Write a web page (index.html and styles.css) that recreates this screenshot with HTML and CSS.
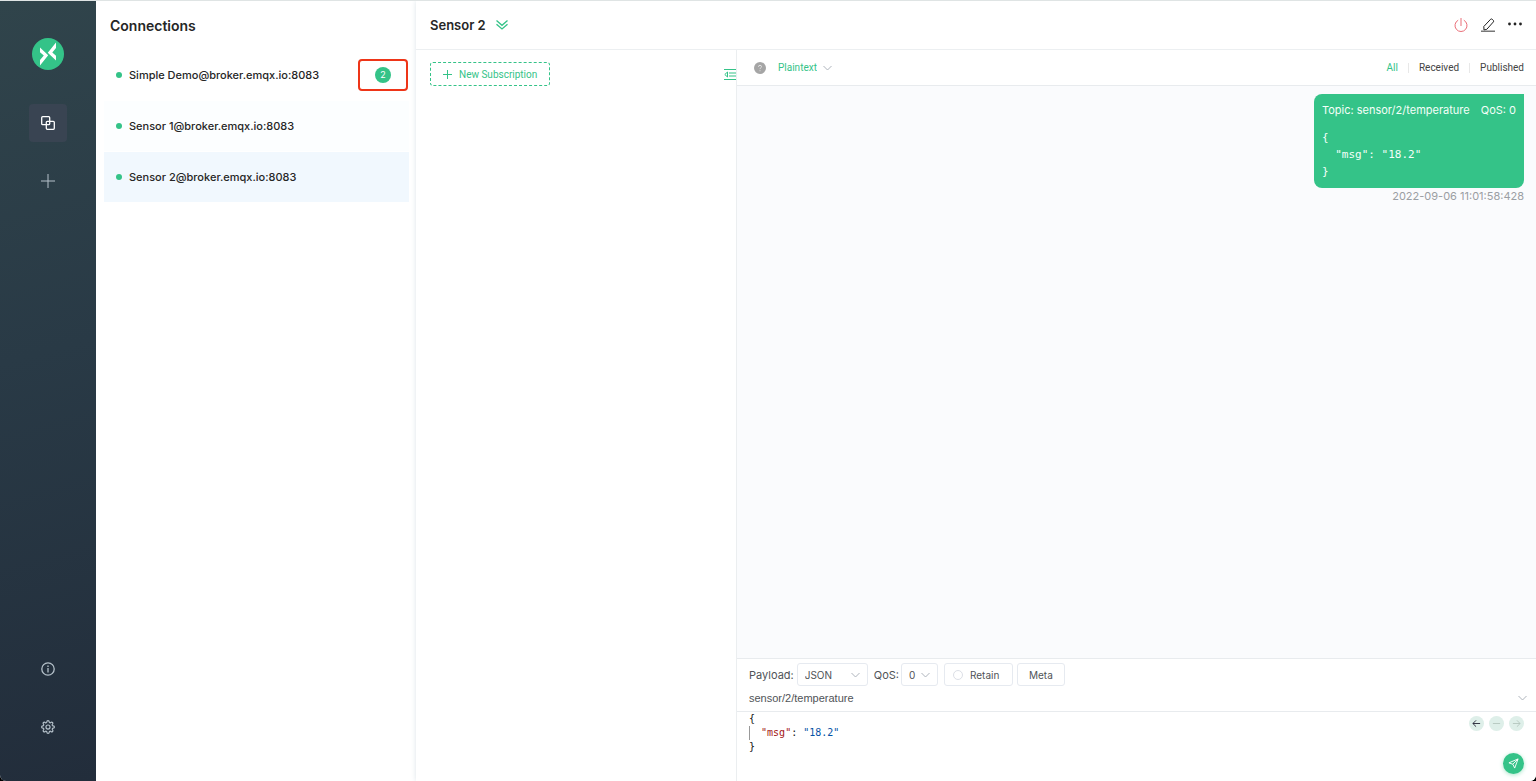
FILE: index.html
```html
<!DOCTYPE html>
<html lang="en">
<head>
<meta charset="utf-8">
<title>MQTTX Web</title>
<link rel="stylesheet" href="styles.css">
</head>
<body>
<div class="app">
  <nav class="rail" aria-label="Main">
    <div class="rail-group">
      <svg class="logo" viewBox="0 0 32 32" aria-hidden="true">
        <circle cx="16" cy="16" r="16" fill="#34c388"/>
        <path d="M8 9.500L16.200 17.200L8 27.500V22L11.800 17.500L8 14.200z" fill="#fff"/>
        <path d="M24 4.500V10L20.300 14.500L24 17.800V22.500L15.800 14.800z" fill="#fff"/>
      </svg>
      <button class="rail-button active" aria-label="Connections">
        <svg class="icon-sm" viewBox="0 0 14 14"><g stroke-width="1.300"><rect x=".700" y=".700" width="8" height="8" rx="1"/><rect x="5.300" y="5.300" width="8" height="8" rx="1"/></g></svg>
      </button>
      <button class="rail-button" aria-label="New connection">
        <svg class="icon-sm" viewBox="0 0 14 14"><path d="M7 0V14M0 7H14"/></svg>
      </button>
    </div>
    <div class="rail-group">
      <button class="rail-button" aria-label="About">
        <svg class="icon-sm" viewBox="0 0 14 14"><g stroke-width="1.300"><circle cx="7" cy="7" r="6.200"/><path d="M7 6V10.500M7 3.500V4.900"/></g></svg>
      </button>
      <button class="rail-button" aria-label="Settings">
        <svg class="icon-sm" viewBox="0 0 24 24"><g stroke-width="2"><circle cx="12" cy="12" r="3.500"/><path d="M19.400 15a1.650 1.650 0 0 0 .33 1.820l.06.060a2 2 0 1 1-2.830 2.830l-.06-.060a1.650 1.650 0 0 0-2.800 1.170V21a2 2 0 1 1-4 0v-.09A1.650 1.650 0 0 0 7.200 19.700l-.06.060a2 2 0 1 1-2.830-2.830l.06-.060A1.650 1.650 0 0 0 3.200 14H3a2 2 0 1 1 0-4h.09A1.650 1.650 0 0 0 4.300 7.200l-.06-.060a2 2 0 1 1 2.830-2.830l.06.060A1.650 1.650 0 0 0 10 3.200V3a2 2 0 1 1 4 0v.09a1.650 1.650 0 0 0 2.800 1.210l.06-.060a2 2 0 1 1 2.830 2.830l-.06.060A1.650 1.650 0 0 0 20.800 10H21a2 2 0 1 1 0 4h-.09a1.650 1.650 0 0 0-1.510 1z"/></g></svg>
      </button>
    </div>
  </nav>

  <aside class="connections">
    <h1 class="title">Connections</h1>
    <ul class="connection-list">
      <li class="connection"><span class="dot"></span><span>Simple Demo@broker.emqx.io:8083</span><span class="highlight"><span class="badge">2</span></span></li>
      <li class="connection visited"><span class="dot"></span><span>Sensor 1@broker.emqx.io:8083</span></li>
      <li class="connection selected"><span class="dot"></span><span>Sensor 2@broker.emqx.io:8083</span></li>
    </ul>
  </aside>

  <main class="main">
    <header class="topbar">
      <h2 class="subject">Sensor 2</h2>
      <button class="plain" aria-label="Show details"><svg class="chevrons" viewBox="0 0 12 10"><path d="M.500 .500L6 5.300L11.500 .500M.500 4.200L6 9L11.500 4.200" stroke-width="1.300"/></svg></button>
      <div class="actions">
        <button class="plain danger" aria-label="Disconnect"><svg class="icon" viewBox="0 0 14 14"><path d="M7 0V8M4.200 2.200A6 6 0 1 0 9.800 2.200"/></svg></button>
        <button class="plain" aria-label="Edit"><svg class="icon" viewBox="0 0 14 14"><path d="M3 12L2.800 8.500L9.700 1.200Q10.400.600 11.200 1.300L12.400 2.400Q13 3.200 12.300 4L5.800 11.300z"/><path d="M0 13.200H14" stroke="#777" stroke-width="1.500"/></svg></button>
        <button class="plain" aria-label="More"><svg class="icon" viewBox="0 0 14 14"><g fill="#222" stroke="none"><circle cx="1.500" cy="6" r="1.400"/><circle cx="7" cy="6" r="1.400"/><circle cx="12.500" cy="6" r="1.400"/></g></svg></button>
      </div>
    </header>

    <div class="workspace">
      <section class="subscriptions" aria-label="Subscriptions">
        <button class="new-subscription"><svg class="plus" viewBox="0 0 9 9"><path d="M4.500 0V9M0 4.500H9"/></svg>New Subscription</button>
        <button class="plain collapse" aria-label="Collapse"><svg class="fold" viewBox="0 0 12 11"><path d="M0 .500H12M5 4H12M5 7H12M0 10.500H12M3.500 3L.800 5.500L3.500 8z"/></svg></button>
      </section>

      <section class="messages">
        <div class="filterbar">
          <svg class="help" viewBox="0 0 12 12" aria-hidden="true"><circle cx="6" cy="6" r="6" fill="#a5a5a5" stroke="none"/><path d="M4.500 4.800Q4.500 3.300 6 3.300T7.500 4.700Q7.500 5.400 6.700 5.900Q6 6.300 6 7.100M6 8.300V9.200" fill="none" stroke="#e4e4e4"/></svg>
          <label class="select format"><select aria-label="Display format"><option>Plaintext</option></select><svg class="chevron" viewBox="0 0 9 6"><path d="M.500 1L4.500 5L8.500 1"/></svg></label>
          <div class="filters">
            <button class="filter on">All</button>
            <button class="filter">Received</button>
            <button class="filter">Published</button>
          </div>
        </div>

        <div class="stream">
          <article class="bubble">
            <div class="meta"><span>Topic: sensor/2/temperature</span><span>QoS: 0</span></div>
            <pre class="payload">{
  "msg": "18.2"
}</pre>
          </article>
          <time class="stamp">2022-09-06 11:01:58:428</time>
        </div>

        <form class="composer">
          <div class="options">
            <label for="payload">Payload:</label>
            <span class="select box json"><select id="payload"><option>JSON</option></select><svg class="chevron" viewBox="0 0 9 6"><path d="M.500 1L4.500 5L8.500 1"/></svg></span>
            <label for="qos">QoS:</label>
            <span class="select box qos"><select id="qos"><option>0</option></select><svg class="chevron" viewBox="0 0 9 6"><path d="M.500 1L4.500 5L8.500 1"/></svg></span>
            <label class="box retain"><input type="radio" class="radio">Retain</label>
            <button type="button" class="box meta-button">Meta</button>
          </div>
          <div class="topic-row">
            <input class="topic" aria-label="Topic" value="sensor/2/temperature">
            <svg class="chevron" viewBox="0 0 9 6"><path d="M.500 1L4.500 5L8.500 1"/></svg>
          </div>
          <div class="editor">
            <pre class="code">{
<span class="guide"> </span> <span class="key">"msg"</span>: <span class="value">"18.2"</span>
}</pre>
            <div class="editor-side">
              <div class="history">
                <button type="button" class="round" aria-label="Previous"><svg viewBox="0 0 10 10"><path d="M9 5H1M4.500 1.500L1 5L4.500 8.500"/></svg></button>
                <button type="button" class="round off" aria-label="Clear"><svg viewBox="0 0 10 10"><path d="M1 5H9"/></svg></button>
                <button type="button" class="round off" aria-label="Next"><svg viewBox="0 0 10 10"><path d="M1 5H9M5.500 1.500L9 5L5.500 8.500"/></svg></button>
              </div>
              <button type="button" class="send" aria-label="Publish"><svg viewBox="0 0 12 12"><path d="M11 1L7.300 11L5.300 6.800L1 5.300zM11 1L5.300 6.800"/></svg></button>
            </div>
          </div>
        </form>
      </section>
    </div>
  </main>
</div>
</body>
</html>
```

FILE: styles.css
```css
* { box-sizing: border-box; }
body { margin: 0; background: #000; font-family: Inter, "Liberation Sans", sans-serif; font-size: 11px; color: #262626; }
button, select, input { font: inherit; color: inherit; }
h1, h2, ul, pre { margin: 0; padding: 0; }
svg { display: block; fill: none; stroke: currentColor; stroke-width: 1; }
button { cursor: pointer; }

.app { display: flex; height: 100vh; border-top: 1px solid #dfe4e4; border-radius: 0 0 6px 6px; overflow: hidden; background: #fff; }

.rail { flex: none; width: 96px; display: flex; flex-direction: column; justify-content: space-between; padding: 37px 0 35px; background: linear-gradient(165deg, #30444b 0%, #293a46 45%, #222d3b 100%); color: #b5c1ca; }
.rail-group { display: flex; flex-direction: column; align-items: center; gap: 20px; }
.logo { width: 32px; height: 32px; margin-bottom: 14px; stroke: none; }
.rail-button { width: 38px; height: 38px; display: grid; place-items: center; padding: 0; border: 0; border-radius: 4px; background: none; }
.rail-button.active { background: #394452; color: #fff; }
.icon-sm { width: 14px; height: 14px; }

.connections { flex: none; width: 320px; padding: 16px 7px 0 8px; }
.title { padding-left: 6px; font-size: 14px; line-height: 18px; font-weight: 600; }
.connection-list { list-style: none; margin-top: 15px; display: grid; gap: 1px; }
.connection { display: flex; align-items: center; height: 50px; padding: 0 1px 0 12px; font-weight: 500; }
.dot { width: 6px; height: 6px; margin-right: 7px; border-radius: 50%; background: #34c388; }
.visited { background: #fcfeff; }
.selected { background: #f1f8fe; }
.highlight { width: 50px; height: 32px; margin-left: auto; display: grid; place-items: center; border: 2px solid #ee3518; border-radius: 4px; }
.badge { width: 16px; height: 16px; border-radius: 50%; background: #34c388; color: #fff; font-size: 9px; line-height: 16px; text-align: center; font-weight: 400; }

.main { flex: 1; min-width: 0; display: flex; flex-direction: column; box-shadow: 0 0 5px #dce4e8; }
.topbar { flex: none; height: 49px; display: flex; align-items: center; padding: 0 14px; border-bottom: 1px solid #eceff1; }
.subject { font-size: 13px; line-height: 18px; font-weight: 600; margin-right: 10px; }
.plain { padding: 0; border: 0; background: none; color: #222; }
.plain .chevrons { width: 12px; height: 10px; color: #34c388; }
.actions { display: flex; gap: 13px; margin-left: auto; }
.icon { width: 14px; height: 14px; }
.danger { color: #e96e78; }

.workspace { flex: 1; min-height: 0; display: flex; }
.subscriptions { flex: none; width: 320px; display: flex; justify-content: space-between; align-items: center; align-self: flex-start; padding: 12px 0 12px 14px; font-family: Roboto, Arial, sans-serif; font-size: 10px; color: #34c388; }
.new-subscription { display: flex; align-items: center; gap: 7px; height: 24px; padding: 0 12px; border: 1px dashed #34c388; border-radius: 3px; background: none; }
.plus { width: 9px; height: 9px; }
.collapse { color: #34c388; }
.fold { width: 12px; height: 11px; }

.messages { flex: 1; min-width: 0; display: flex; flex-direction: column; border-left: 1px solid #ebeef0; }
.filterbar { flex: none; height: 36px; display: flex; align-items: center; padding: 0 12px 0 17px; border-bottom: 1px solid #e8ebee; }
.help { width: 12px; height: 12px; }
.select { display: inline-flex; align-items: center; }
.select select { appearance: none; flex: 1; min-width: 0; padding: 0; border: 0; background: none; outline: none; }
.chevron { flex: none; width: 9px; height: 6px; color: #aeb4bc; }
.format { margin-left: 12px; gap: 6px; font-family: Roboto, Arial, sans-serif; font-size: 10px; color: #34c388; }
.filters { display: flex; margin-left: auto; }
.filter { padding: 0 10px; border: 0; border-left: 1px solid #e8e8e8; background: none; font-family: Roboto, Arial, sans-serif; font-size: 10px; line-height: 10px; color: #444; }
.filter:first-child { border-left: 0; }
.filter:last-child { padding-right: 0; }
.filter.on { color: #34c388; }

.stream { flex: 1; min-height: 0; display: flex; flex-direction: column; align-items: flex-end; padding: 8px 12px; background: #fafbfd; }
.bubble { padding: 8px; border-radius: 8px 0 8px 8px; background: #34c388; color: #f4fff9; }
.meta { display: flex; gap: 11px; line-height: 16px; }
.payload { margin-top: 11px; font: 11px/17px "DejaVu Sans Mono", monospace; }
.stamp { line-height: 17px; color: #9a9ea3; }

.composer { flex: none; height: 123px; display: flex; flex-direction: column; border-top: 1px solid #e8ebee; color: #505357; background: #fff; }
.options { display: flex; align-items: center; padding: 4px 12px 0; }
.box { height: 23px; display: flex; align-items: center; border: 1px solid #e6eaf0; border-radius: 3px; background: #fff; font-size: 10px; }
.json { width: 71px; padding: 0 7px; margin: 0 6px 0 3px; }
.qos { width: 37px; padding: 0 7px; margin: 0 6px 0 2px; }
.retain { width: 69px; padding: 0 8px; margin-right: 4px; gap: 7px; }
.radio { appearance: none; width: 10px; height: 10px; margin: 0; border: 1px solid #dcdfe6; border-radius: 50%; }
.meta-button { padding: 0 11px; }
.topic-row { display: flex; align-items: center; height: 26px; padding: 0 9px 1px 12px; border-bottom: 1px solid #e8ebee; }
.topic { flex: 1; min-width: 0; padding: 0; border: 0; outline: none; background: none; font-family: "Liberation Sans", Arial, sans-serif; font-size: 11px; }
.editor { flex: 1; display: flex; justify-content: space-between; padding: 0 12px; }
.code { font: 10px/14px "DejaVu Sans Mono", monospace; color: #111; }
.guide { display: inline-block; border-left: 1px solid #999; margin-right: -1px; }
.key { color: #a31515; }
.value { color: #0451a5; }
.editor-side { display: flex; flex-direction: column; align-items: flex-end; justify-content: space-between; padding: 4px 0 7px; }
.history { display: flex; gap: 5px; }
.round { width: 15px; height: 15px; display: grid; place-items: center; padding: 0; border: 0; border-radius: 50%; background: #deefe9; color: #223; }
.round svg { width: 9px; height: 9px; }
.off { color: #b4c6be; }
.send { width: 21px; height: 21px; display: grid; place-items: center; padding: 0; border: 0; border-radius: 50%; background: #34c388; color: #fff; box-shadow: 0 1px 4px #a8e4c9; }
.send svg { width: 11px; height: 11px; }
```
